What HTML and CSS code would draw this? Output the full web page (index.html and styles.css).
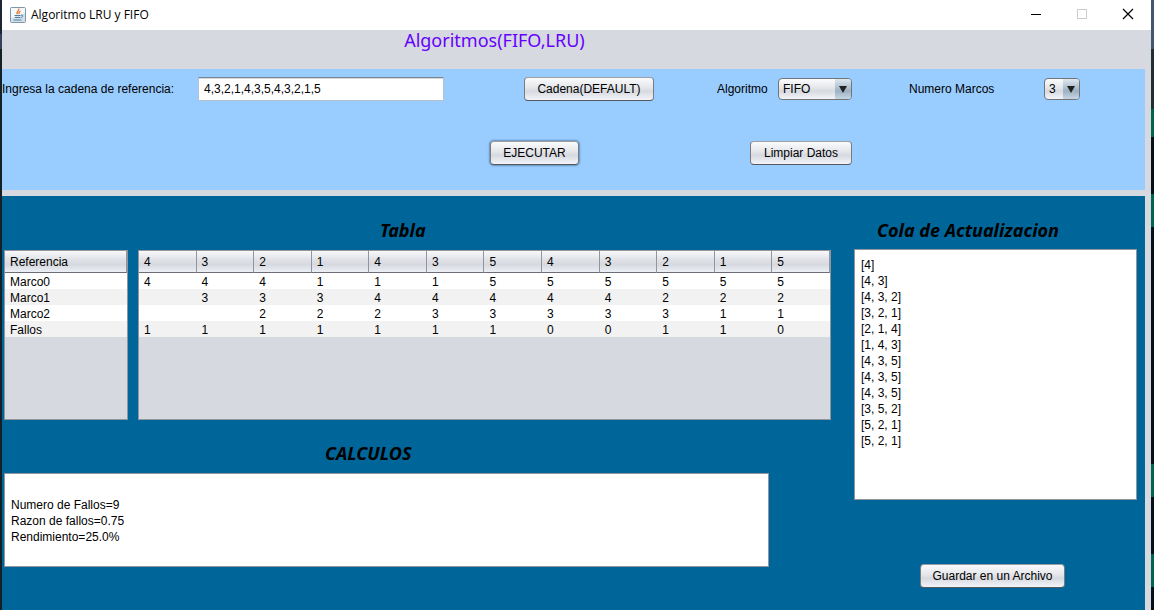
FILE: index.html
```html
<!DOCTYPE html>
<html lang="es">
<head>
<meta charset="utf-8">
<title>Algoritmo LRU y FIFO</title>
<link rel="stylesheet" href="styles.css">
</head>
<body>
<div class="window">
  <header class="titlebar">
    <svg class="app-icon" viewBox="0 0 16 16" aria-hidden="true">
      <rect x="0.5" y="0.5" width="15" height="15" rx="1" fill="#d3e0ea" stroke="#8097aa"/>
      <path d="M1 1h14v5L1 11z" fill="#f4f8fa"/>
      <path d="M8.8 1.5c1 2-3.2 3-1.4 5.6M10.6 4c-2 1-2 2-1.2 3.2" fill="none" stroke="#e8762c" stroke-width="1.3"/>
      <path d="M4.5 8.5h6M5 10.5h5M3.5 13h8M11 8.2c2.6-.6 2.4 2-.4 2.5" fill="none" stroke="#4f7fa3" stroke-width="1"/>
    </svg>
    <span class="caption">Algoritmo LRU y FIFO</span>
    <button class="win-btn" aria-label="Minimizar"><svg viewBox="0 0 12 12"><path d="M1 6.5h10" stroke="#000"/></svg></button>
    <button class="win-btn" aria-label="Maximizar" disabled><svg viewBox="0 0 12 12"><rect x="1.5" y="1.5" width="9" height="9" fill="none" stroke="#ccc"/></svg></button>
    <button class="win-btn" aria-label="Cerrar"><svg viewBox="0 0 12 12"><path d="M1 1l10 10M11 1L1 11" stroke="#000" stroke-width="1.2"/></svg></button>
  </header>

  <h1 class="app-title">Algoritmos(FIFO,LRU)</h1>

  <div class="content">
    <form class="controls">
      <div class="row row-inputs">
        <label class="c-label" for="cadena">Ingresa la cadena de referencia:</label>
        <input class="field" id="cadena" type="text" value="4,3,2,1,4,3,5,4,3,2,1,5">
        <button class="btn c-default" type="button">Cadena(DEFAULT)</button>
        <label class="c-algo" for="algoritmo">Algoritmo</label>
        <span class="combo c-algo-box"><select id="algoritmo"><option>FIFO</option><option>LRU</option></select></span>
        <label class="c-frames" for="marcos">Numero Marcos</label>
        <span class="combo c-frames-box"><select id="marcos"><option>3</option><option>4</option></select></span>
      </div>
      <div class="row row-actions">
        <button class="btn btn-focus c-run" type="button">EJECUTAR</button>
        <button class="btn c-clear" type="button">Limpiar Datos</button>
      </div>
    </form>

    <main class="results">
      <section class="left">
        <h2 class="h-table">Tabla</h2>
        <div class="tables">
          <div class="pane">
            <table>
              <thead><tr><th>Referencia</th></tr></thead>
              <tbody>
                <tr><td>Marco0</td></tr>
                <tr><td>Marco1</td></tr>
                <tr><td>Marco2</td></tr>
                <tr><td>Fallos</td></tr>
              </tbody>
            </table>
          </div>
          <div class="pane">
            <table>
              <thead><tr><th>4</th><th>3</th><th>2</th><th>1</th><th>4</th><th>3</th><th>5</th><th>4</th><th>3</th><th>2</th><th>1</th><th>5</th></tr></thead>
              <tbody>
                <tr><td>4</td><td>4</td><td>4</td><td>1</td><td>1</td><td>1</td><td>5</td><td>5</td><td>5</td><td>5</td><td>5</td><td>5</td></tr>
                <tr><td></td><td>3</td><td>3</td><td>3</td><td>4</td><td>4</td><td>4</td><td>4</td><td>4</td><td>2</td><td>2</td><td>2</td></tr>
                <tr><td></td><td></td><td>2</td><td>2</td><td>2</td><td>3</td><td>3</td><td>3</td><td>3</td><td>3</td><td>1</td><td>1</td></tr>
                <tr><td>1</td><td>1</td><td>1</td><td>1</td><td>1</td><td>1</td><td>1</td><td>0</td><td>0</td><td>1</td><td>1</td><td>0</td></tr>
              </tbody>
            </table>
          </div>
        </div>
        <h2 class="h-calc"><label for="calculos">CALCULOS</label></h2>
        <textarea class="output calc" id="calculos" readonly>

Numero de Fallos=9
Razon de fallos=0.75
Rendimiento=25.0%</textarea>
      </section>
      <section class="right">
        <h2 class="h-queue"><label for="cola">Cola de Actualizacion</label></h2>
        <textarea class="output queue" id="cola" readonly>[4]
[4, 3]
[4, 3, 2]
[3, 2, 1]
[2, 1, 4]
[1, 4, 3]
[4, 3, 5]
[4, 3, 5]
[4, 3, 5]
[3, 5, 2]
[5, 2, 1]
[5, 2, 1]</textarea>
        <button class="btn save" type="button">Guardar en un Archivo</button>
      </section>
    </main>
  </div>
</div>
</body>
</html>
```

FILE: styles.css
```css
* { box-sizing: border-box; }

body {
  margin: 0;
  min-height: 100vh;
  display: flex;
  padding: 0 3px 0 2px;
  color: #000;
  font: 12px/16px "Liberation Sans", Arial, sans-serif;
  /* strips of the desktop behind the window */
  background:
    linear-gradient(#435570 0 49px, #1f2f35 49px 109px, #006450 109px 137px, #070f1a 137px 194px,
      #006450 194px 227px, #070f1a 227px 464px, #006450 464px 497px, #070f1a 497px 554px,
      #006450 554px 587px, #070f1a 587px) right top / 3px 100% no-repeat,
    linear-gradient(#1d2433 0 34px, #34425a 34px 49px, #152026 49px) left top / 2px 100% no-repeat,
    #152026;
}

button, input, select, textarea { font: inherit; color: inherit; margin: 0; }
h1, h2 { margin: 0; font-family: "Noto Sans", "Open Sans", sans-serif; font-size: 18px; line-height: 24px; }

.window { flex: 1; min-width: 0; display: flex; flex-direction: column; background: #d6d9df; }

.titlebar { display: flex; align-items: center; height: 30px; background: #fff; }
.app-icon { width: 16px; height: 16px; margin: 0 5px 0 8px; }
.caption { flex: 1; font-family: "Open Sans", "Noto Sans", sans-serif; }
.win-btn { width: 46px; height: 28px; padding: 0; border: 0; background: none; }
.win-btn svg { display: block; width: 12px; height: 12px; margin: 0 auto; }
.titlebar .win-btn { align-self: flex-start; }

.app-title { height: 39px; padding-left: 35%; color: #60f; font-weight: 400; line-height: 20px; }

.content { flex: 1; display: flex; flex-direction: column; gap: 6px; margin-right: 6px; }

.controls { padding: 8px 0 25px; background: #9cf; }
.row { display: grid; align-items: center; height: 24px; white-space: nowrap; }
.row-inputs { grid-template-columns: 196fr 246fr 80fr 130fr 63fr 61fr 74fr 57fr 135fr 36fr 65fr; }
.row-actions { grid-template-columns: 488fr 89fr 171fr 102fr 293fr; margin-top: 40px; }
.c-default { grid-column: 4; }
.c-algo { grid-column: 6; }
.c-algo-box { grid-column: 7; }
.c-frames { grid-column: 9; }
.c-frames-box { grid-column: 10; }
.c-run { grid-column: 2; }
.c-clear { grid-column: 4; }

.field {
  width: 100%;
  height: 24px;
  padding: 0 5px;
  border: 1px solid #b5c1cc;
  border-top-color: #7c8690;
  background: #fff;
  box-shadow: inset 0 1px #d5d8db;
}

.btn {
  height: 24px;
  padding: 0;
  border: 1px solid #787b82;
  border-top-color: #9b9ea6;
  border-bottom-color: #55585f;
  border-radius: 4px;
  background: linear-gradient(#fbfbfc, #e3e5e9 45%, #d6d9df 60%, #f2f4f9);
}
.btn-focus { box-shadow: 0 0 0 1px #6f9fc9, 0 0 2px 1px #6f9fc9; }

.combo {
  position: relative;
  height: 22px;
  overflow: hidden;
  border: 1px solid #70747b;
  border-radius: 4px;
  background: linear-gradient(#fbfbfc, #e3e5e9 45%, #d6d9df 60%, #f2f4f9);
}
.combo select {
  display: block;
  appearance: none;
  width: 100%;
  height: 20px;
  padding: 0 18px 0 4px;
  border: 0;
  background: linear-gradient(#dfe7ee, #a8bacb 50%, #9db1c4 60%, #c6d6e4) right / 16px 100% no-repeat;
}
.combo::after {
  content: "";
  position: absolute;
  right: 4px;
  top: 7px;
  border: 4px solid transparent;
  border-top: 7px solid #222;
  border-bottom: 0;
  pointer-events: none;
}

.results {
  flex: 1;
  display: grid;
  grid-template-columns: minmax(0, 1fr) 283px;
  gap: 23px;
  padding: 22px 8px 22px 2px;
  background: #069;
}
h2 { font-style: italic; font-weight: 700; }
.h-table { padding-left: 376px; margin-bottom: 8px; }
.h-calc { padding-left: 321px; margin: 21px 0 8px; }
.h-queue { padding-left: 23px; margin-bottom: 7px; }

.tables { display: grid; grid-template-columns: 124px minmax(0, 1fr); gap: 10px; }
.pane { min-height: 170px; border: 1px solid #92959d; background: #d6d9df; }
table { width: 100%; border-collapse: separate; border-spacing: 0; table-layout: fixed; }
th, td { text-align: left; font-weight: 400; padding: 0 0 0 5px; }
th {
  height: 22px;
  border-right: 1px solid #92959d;
  border-bottom: 1px solid #6b6e76;
  background: linear-gradient(#fafafc, #e0e2e7 40%, #d6d9df 65%, #eceff6);
}
td { height: 16px; padding-top: 2px; line-height: 14px; background: #fff; }
tr:nth-child(even) td { background: #f2f2f2; }

.output {
  display: block;
  width: 100%;
  padding: 7px 6px;
  border: 1px solid #92959d;
  background: #fff;
  resize: none;
  overflow: hidden;
}
.calc { width: calc(100% - 62px); height: 94px; }
.queue { height: 251px; }
.save { display: block; width: 145px; margin: 64px 0 0 66px; }
```
